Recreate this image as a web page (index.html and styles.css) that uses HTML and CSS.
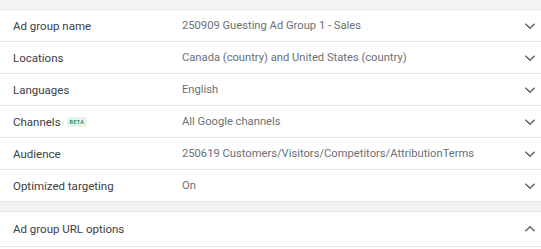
FILE: index.html
```html
<!DOCTYPE html>
<html>
<head>
<meta charset="utf-8">
<link rel="stylesheet" href="styles.css">
</head>
<body>
<div class="band band-top"></div>
<div class="panel">
  <div class="row">
    <div class="label">Ad group name</div>
    <div class="value">250909 Guesting Ad Group 1 - Sales</div>
    <svg class="chev" viewBox="0 0 24 24"><path d="M7 9.5l5 5 5-5" /></svg>
  </div>
  <div class="row">
    <div class="label">Locations</div>
    <div class="value">Canada (country) and United States (country)</div>
    <svg class="chev" viewBox="0 0 24 24"><path d="M7 9.5l5 5 5-5" /></svg>
  </div>
  <div class="row">
    <div class="label">Languages</div>
    <div class="value">English</div>
    <svg class="chev" viewBox="0 0 24 24"><path d="M7 9.5l5 5 5-5" /></svg>
  </div>
  <div class="row">
    <div class="label">Channels <span class="beta">BETA</span></div>
    <div class="value">All Google channels</div>
    <svg class="chev" viewBox="0 0 24 24"><path d="M7 9.5l5 5 5-5" /></svg>
  </div>
  <div class="row">
    <div class="label">Audience</div>
    <div class="value">250619 Customers/Visitors/Competitors/AttributionTerms</div>
    <svg class="chev" viewBox="0 0 24 24"><path d="M7 9.5l5 5 5-5" /></svg>
  </div>
  <div class="row">
    <div class="label">Optimized targeting</div>
    <div class="value">On</div>
    <svg class="chev" viewBox="0 0 24 24"><path d="M7 9.5l5 5 5-5" /></svg>
  </div>
</div>
<div class="band band-mid"></div>
<div class="panel">
  <div class="row row-url">
    <div class="label">Ad group URL options</div>
    <div class="value"></div>
    <svg class="chev" viewBox="0 0 24 24"><path d="M7 14.5l5-5 5 5" /></svg>
  </div>
</div>
</body>
</html>
```
FILE: styles.css
```css
html, body {
  margin: 0;
  padding: 0;
  background: #ffffff;
}
body {
  font-family: Roboto, "Noto Sans", Arial, sans-serif;
  font-size: 11.5px;
  width: 541px;
}
.band {
  background: #f1f3f4;
  border-bottom: 1px solid #e3e5e8;
}
.band-top {
  height: 9px;
}
.band-mid {
  height: 9px;
  border-top: 1px solid #e3e5e8;
}
.panel {
  background: #ffffff;
}
.row {
  display: flex;
  align-items: center;
  height: 31px;
  border-bottom: 1px solid #e3e5e8;
  padding-left: 13px;
  padding-right: 0;
}
.row:last-child {
  border-bottom: none;
}
.row-url {
  height: 34px;
  border-bottom: 1px solid #e3e5e8 !important;
}
.label {
  width: 169px;
  color: #3c4043;
  display: flex;
  align-items: center;
  white-space: nowrap;
}
.value {
  flex: 1;
  color: #6b6f74;
  font-size: 11.2px;
  white-space: nowrap;
}
.beta {
  display: inline-block;
  margin-left: 6px;
  background: #e6f4ea;
  color: #188038;
  font-size: 5.5px;
  font-weight: 500;
  letter-spacing: 0.3px;
  padding: 2px 3px;
  line-height: 6px;
  border-radius: 2px;
}
.chev {
  width: 22px;
  height: 22px;
  margin-right: 0;
  fill: none;
  stroke: #5f6368;
  stroke-width: 1.5;
}
```
